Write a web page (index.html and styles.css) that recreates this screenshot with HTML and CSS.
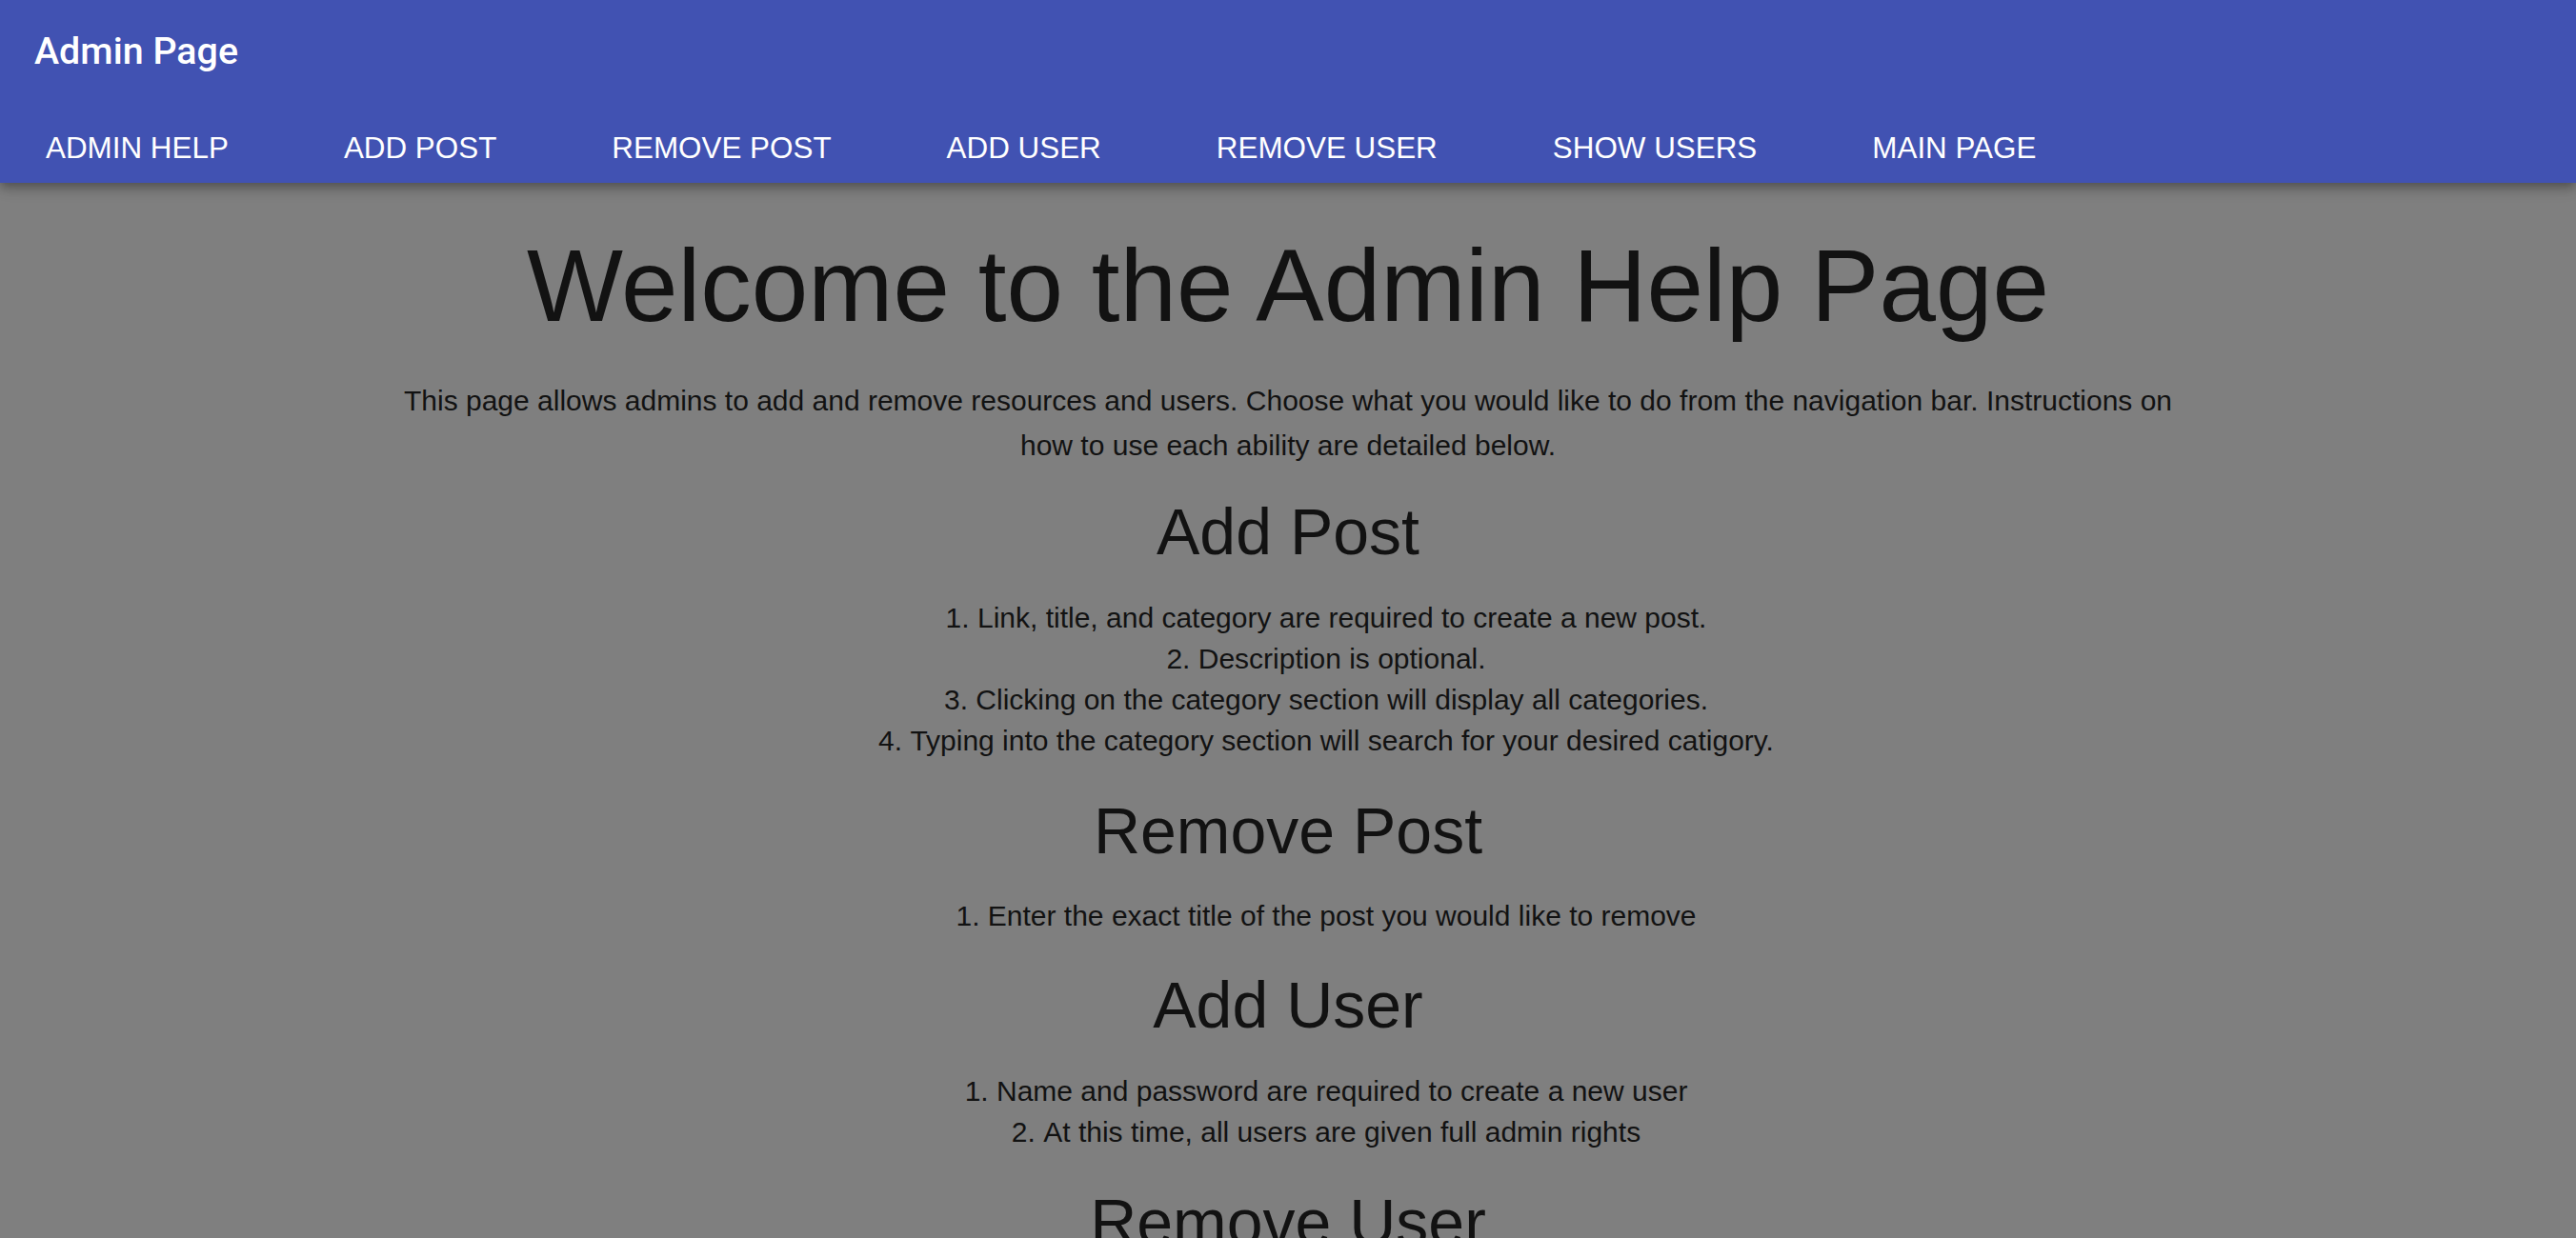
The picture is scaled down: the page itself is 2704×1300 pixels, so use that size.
FILE: index.html
```html
<!DOCTYPE html>
<html lang="en">
<head>
<meta charset="utf-8">
<title>Admin Page</title>
<link rel="stylesheet" href="styles.css">
</head>
<body>
<header class="appbar">
  <div class="appbar-title">Admin Page</div>
  <nav class="tabs">
    <a class="tab" href="#">Admin Help</a>
    <a class="tab" href="#">Add Post</a>
    <a class="tab" href="#">Remove Post</a>
    <a class="tab" href="#">Add User</a>
    <a class="tab" href="#">Remove User</a>
    <a class="tab" href="#">Show Users</a>
    <a class="tab" href="#">Main Page</a>
  </nav>
</header>
<main class="content">
  <h1 class="page-title">Welcome to the Admin Help Page</h1>
  <p class="intro">This page allows admins to add and remove resources and users. Choose what you would like to do from the navigation bar. Instructions on how to use each ability are detailed below.</p>
  <section class="help-section">
    <h2 class="section-title">Add Post</h2>
    <ol class="steps">
      <li>Link, title, and category are required to create a new post.</li>
      <li>Description is optional.</li>
      <li>Clicking on the category section will display all categories.</li>
      <li>Typing into the category section will search for your desired catigory.</li>
    </ol>
  </section>
  <section class="help-section">
    <h2 class="section-title">Remove Post</h2>
    <ol class="steps">
      <li>Enter the exact title of the post you would like to remove</li>
    </ol>
  </section>
  <section class="help-section">
    <h2 class="section-title">Add User</h2>
    <ol class="steps">
      <li>Name and password are required to create a new user</li>
      <li>At this time, all users are given full admin rights</li>
    </ol>
  </section>
  <section class="help-section">
    <h2 class="section-title">Remove User</h2>
    <ol class="steps">
      <li>Enter the exact name of the user you would like to remove</li>
    </ol>
  </section>
</main>
</body>
</html>
```
FILE: styles.css
```css
html, body {
  margin: 0;
  height: 100%;
  overflow: hidden;
}

body {
  background: #7f7f7f;
  color: #121212;
  font-family: "Liberation Sans", Arial, Helvetica, sans-serif;
}

.appbar {
  position: relative;
  z-index: 1;
  background: #4152b2;
  box-shadow: 0 4px 8px -2px rgba(0, 0, 0, 0.2), 0 8px 10px 0 rgba(0, 0, 0, 0.14), 0 2px 20px 0 rgba(0, 0, 0, 0.12);
}

.appbar-title {
  font-family: Roboto, "Liberation Sans", sans-serif;
  font-weight: 500;
  font-size: 39.4px;
  line-height: 40px;
  height: 40px;
  color: #fff;
  padding: 34px 0 0 36px;
}

.tabs {
  display: flex;
  gap: 121px;
  padding: 66px 0 20px 48px;
}

.tab {
  font-size: 31.4px;
  line-height: 32px;
  color: #fff;
  text-decoration: none;
  text-transform: uppercase;
  white-space: nowrap;
}

.content {
  padding-top: 44px;
  text-align: center;
}

.page-title {
  font-size: 107px;
  line-height: 128px;
  font-weight: 400;
  margin: 0;
}

.intro {
  font-size: 30px;
  line-height: 46.5px;
  max-width: 1885px;
  margin: 34px auto 0;
}

.help-section {
  margin-top: 32px;
}

.intro + .help-section {
  margin-top: 27px;
}

.section-title {
  font-size: 68px;
  line-height: 80px;
  font-weight: 400;
  margin: 0;
}

.steps {
  font-size: 30px;
  line-height: 43.3px;
  list-style-position: inside;
  margin: 28.5px 0 0;
  padding-left: 80px;
}
```
